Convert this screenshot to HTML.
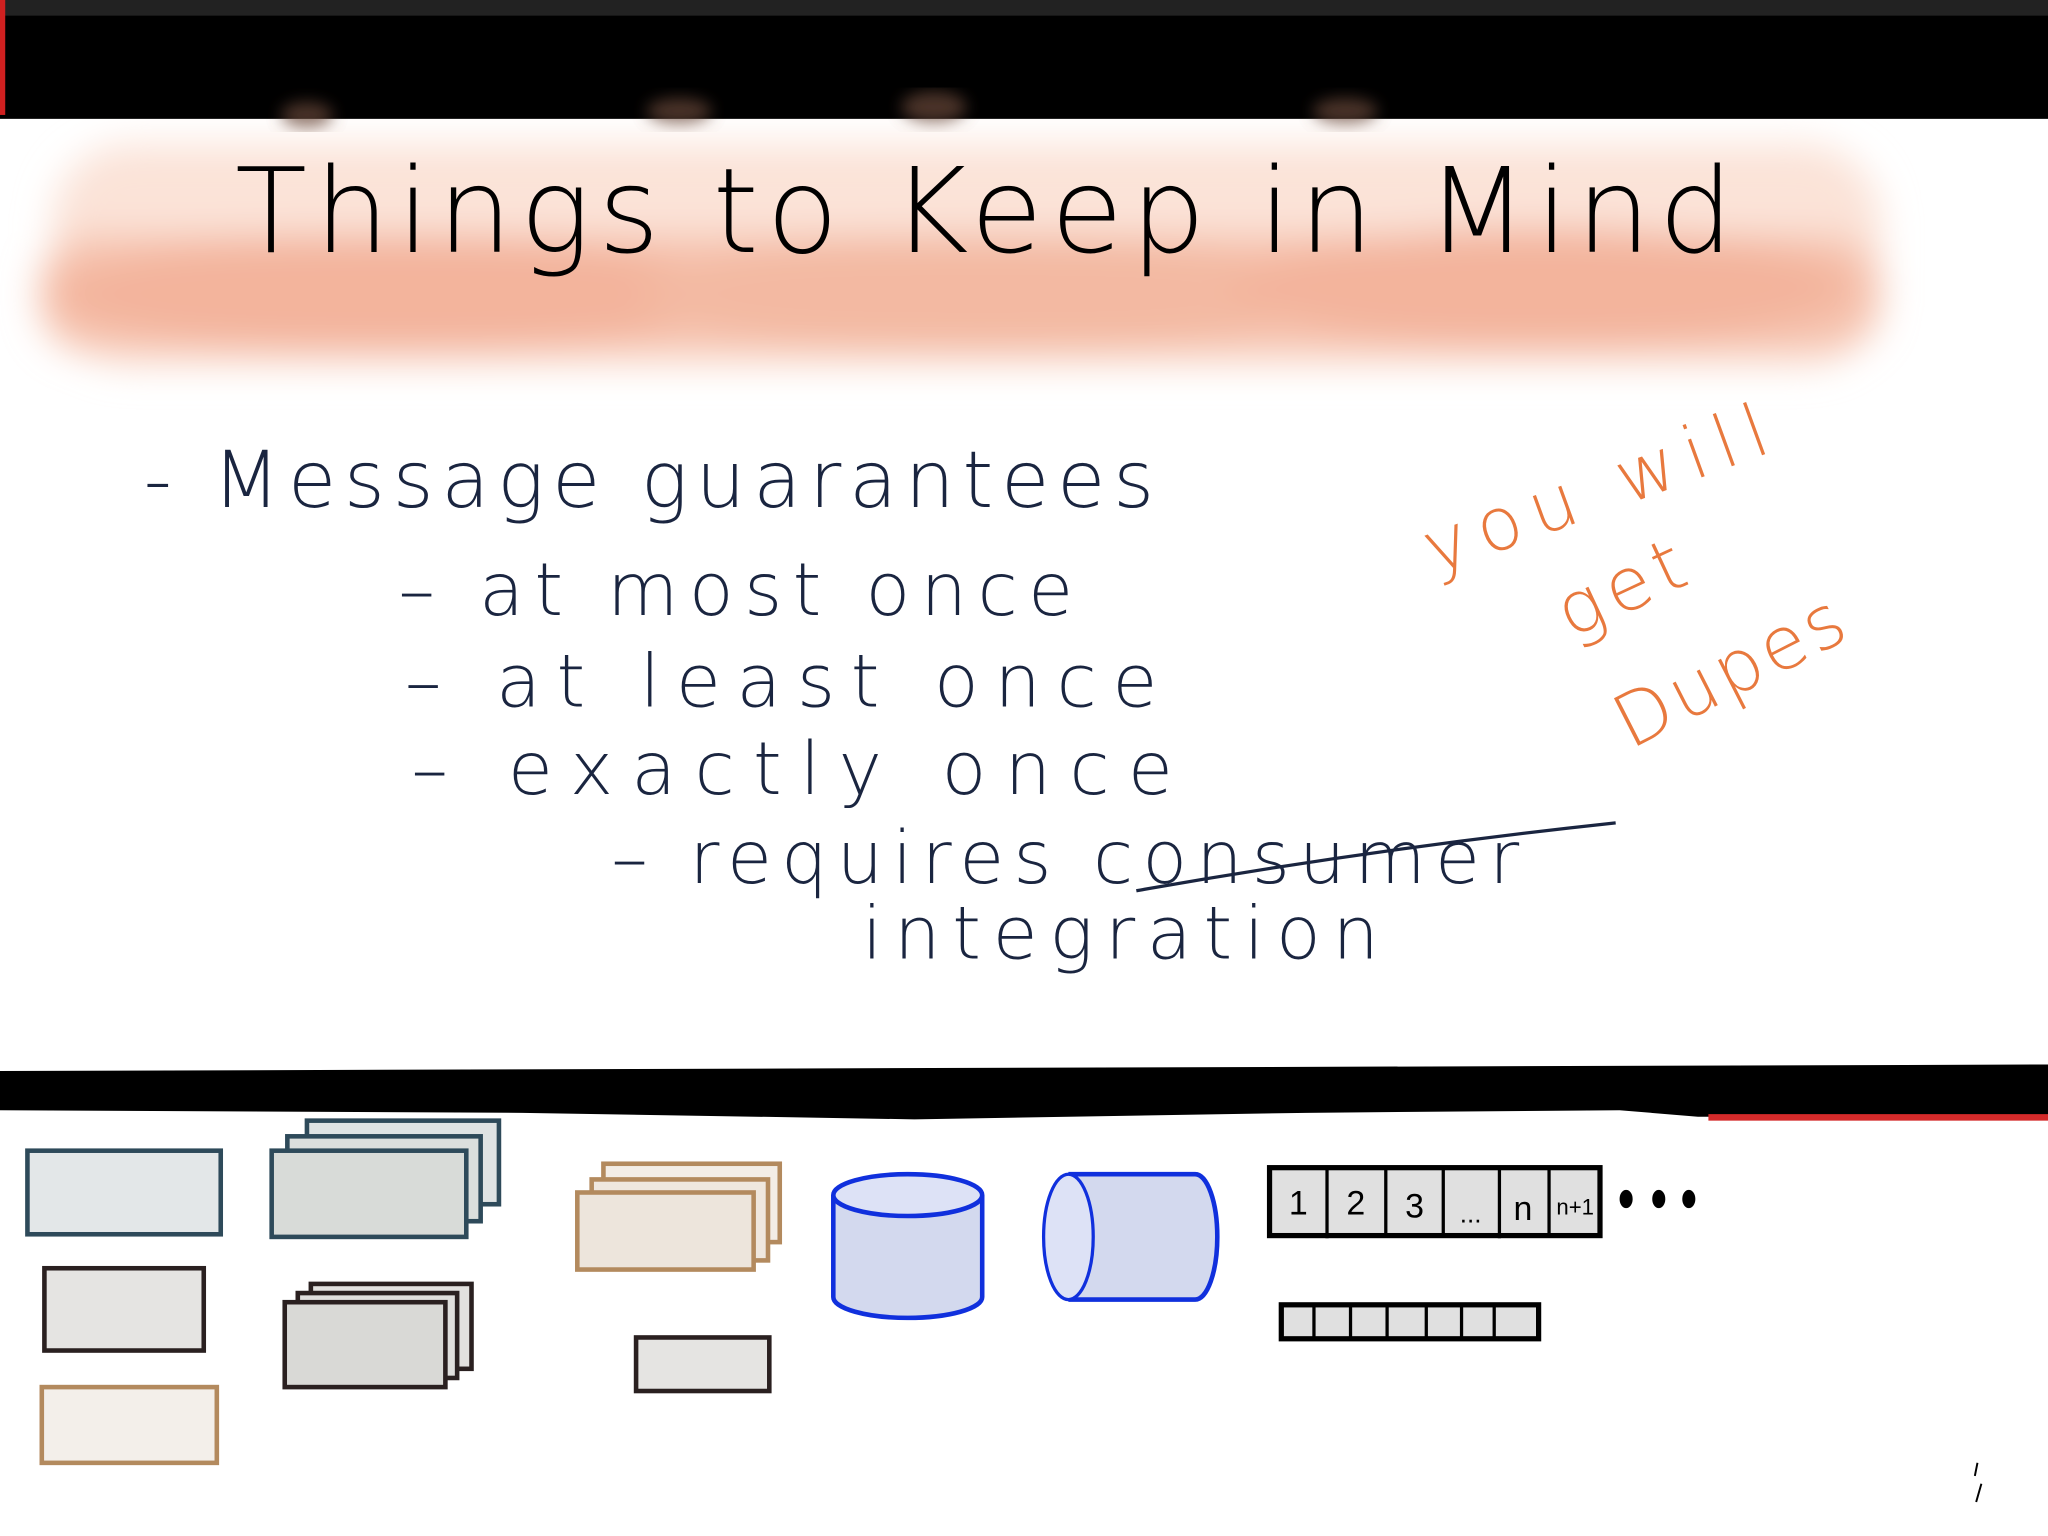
<!DOCTYPE html>
<html><head><meta charset="utf-8">
<style>
html,body{margin:0;padding:0;background:#fff;width:2048px;height:1536px;overflow:hidden}
#wrap{position:absolute;left:0;top:0;width:1568px;height:1176px;transform:scale(1.30612);transform-origin:0 0;overflow:hidden}
.t{position:absolute;white-space:nowrap;font-family:"DejaVu Sans","Liberation Sans",sans-serif;font-weight:200;line-height:1}
</style></head><body>
<div id="wrap">
<svg width="1568" height="1176" viewBox="0 0 1568 1176" style="position:absolute;left:0;top:0">
<defs>
<filter id="b" x="-10%" y="-30%" width="120%" height="160%"><feGaussianBlur stdDeviation="14"/></filter>
<filter id="b2"><feGaussianBlur stdDeviation="6"/></filter>
</defs>
<g filter="url(#b)">
<rect x="40" y="110" width="1400" height="170" rx="60" fill="#fbe3d8"/>
<rect x="30" y="180" width="1410" height="90" rx="40" fill="#f6c4b0"/>
<ellipse cx="300" cy="225" rx="260" ry="45" fill="#f3b49c"/>
<ellipse cx="750" cy="225" rx="260" ry="45" fill="#f3b9a2"/>
<ellipse cx="1180" cy="220" rx="240" ry="45" fill="#f3b49c"/>
</g>
<rect x="0" y="0" width="1568" height="13" fill="#222"/>
<rect x="0" y="12" width="1568" height="79" fill="#000"/>
<rect x="0" y="0" width="4" height="88" fill="#d02020"/>
<g filter="url(#b2)" fill="#6a4a3a" opacity="0.7">
<ellipse cx="235" cy="88" rx="20" ry="10"/><ellipse cx="520" cy="85" rx="25" ry="10"/>
<ellipse cx="715" cy="82" rx="25" ry="12"/><ellipse cx="1030" cy="85" rx="25" ry="10"/>
</g>
<path d="M0 820 L1568 815 L1568 855 L1300 855 L1240 850 L1000 852 L700 857 L400 852 L0 850 Z" fill="#000"/>
<rect x="1308" y="853" width="260" height="5" fill="#d42a2a"/>
<path d="M870 682 Q1050 650 1237 630" stroke="#1a2540" stroke-width="2.5" fill="none"/>
<g stroke-width="3.5">
<rect x="21" y="881" width="148" height="64" fill="#e3e7e8" stroke="#2e4a5a"/>
<rect x="235" y="858" width="147" height="64" fill="#dfe3e3" stroke="#2e4a5a"/>
<rect x="220" y="870" width="148" height="65" fill="#dcdfdd" stroke="#2e4a5a"/>
<rect x="208" y="881" width="149" height="66" fill="#d8dbd8" stroke="#2e4a5a"/>
<rect x="462" y="891" width="135" height="60" fill="#f3ede6" stroke="#b38a5e"/>
<rect x="453" y="903" width="135" height="62" fill="#efe7de" stroke="#b38a5e"/>
<rect x="442" y="913" width="135" height="59" fill="#ede5dc" stroke="#b38a5e"/>
<rect x="34" y="971" width="122" height="63" fill="#e5e4e2" stroke="#2a2020"/>
<rect x="238" y="983" width="123" height="65" fill="#e2e1df" stroke="#2a2020"/>
<rect x="228" y="990" width="122" height="65" fill="#dfdedc" stroke="#2a2020"/>
<rect x="218" y="997" width="123" height="65" fill="#d9d9d6" stroke="#2a2020"/>
<rect x="487" y="1024" width="102" height="41" fill="#e5e4e2" stroke="#2a2020"/>
<rect x="32" y="1062" width="134" height="58" fill="#f3efea" stroke="#b38a5e"/>
<path d="M638 915 L638 993 A57 16 0 0 0 752 993 L752 915" fill="#d3d9ee" stroke="#1030dd"/>
<ellipse cx="695" cy="915" rx="57" ry="16" fill="#dde2f6" stroke="#1030dd"/>
<path d="M818 899 L915 899 A17 48 0 0 1 915 995 L818 995" fill="#d3d9ee" stroke="#1030dd"/>
<ellipse cx="818" cy="947" rx="19" ry="48" fill="#dde2f6" stroke="#1030dd" stroke-width="2.5"/>
<rect x="972" y="894" width="253" height="52" fill="#e0e0e0" stroke="#000" stroke-width="4"/>
<path d="M1016 894V948M1061 894V946M1105 894V946M1148 894V948M1186 894V946" stroke="#000" stroke-width="2.5"/>
<rect x="981" y="999" width="197" height="26" fill="#e0e0e0" stroke="#000" stroke-width="4"/>
<path d="M1006 999V1025M1034 999V1025M1062 999V1025M1092 999V1025M1119 999V1025M1144 999V1025" stroke="#000" stroke-width="2.5"/>
</g>
<g fill="#000"><ellipse cx="1245" cy="918" rx="5" ry="7"/><ellipse cx="1270" cy="918" rx="5" ry="7"/><ellipse cx="1293" cy="918" rx="5" ry="7"/></g>
<g font-family="Liberation Sans,sans-serif" font-size="26" fill="#000" text-anchor="middle">
<text x="994" y="930">1</text><text x="1038" y="930">2</text><text x="1083" y="932">3</text>
<text x="1126" y="936" font-size="20">...</text><text x="1166" y="934">n</text><text x="1206" y="930" font-size="17">n+1</text>
</g>
<path d="M1514 1120 L1512 1130 M1517 1136 L1513 1150" stroke="#000" stroke-width="1.5"/>
</svg>
<div class="t" style="left:180px;top:118px;font-size:90px;letter-spacing:6px;color:#000">Things to Keep in Mind</div>
<div class="t" style="left:110px;top:338px;font-size:60px;letter-spacing:6px;color:#1a2540">- Message guarantees</div>
<div class="t" style="left:305px;top:425px;font-size:56px;letter-spacing:8px;color:#1a2540">– at most once</div>
<div class="t" style="left:310px;top:495px;font-size:56px;letter-spacing:12px;color:#1a2540">– at least once</div>
<div class="t" style="left:315px;top:562px;font-size:56px;letter-spacing:14px;color:#1a2540">– exactly once</div>
<div class="t" style="left:468px;top:630px;font-size:56px;letter-spacing:7px;color:#1a2540">– requires consumer</div>
<div class="t" style="left:660px;top:688px;font-size:56px;letter-spacing:9px;color:#1a2540">integration</div>
<div class="t" style="left:1092px;top:395px;font-size:56px;letter-spacing:9px;color:#e8793e;transform:rotate(-20deg);transform-origin:0 50%">you will</div>
<div class="t" style="left:1195px;top:445px;font-size:56px;letter-spacing:6px;color:#e8793e;transform:rotate(-25deg);transform-origin:0 50%">get</div>
<div class="t" style="left:1240px;top:530px;font-size:56px;letter-spacing:3px;color:#e8793e;transform:rotate(-27deg);transform-origin:0 50%">Dupes</div>
</div>
</body></html>
